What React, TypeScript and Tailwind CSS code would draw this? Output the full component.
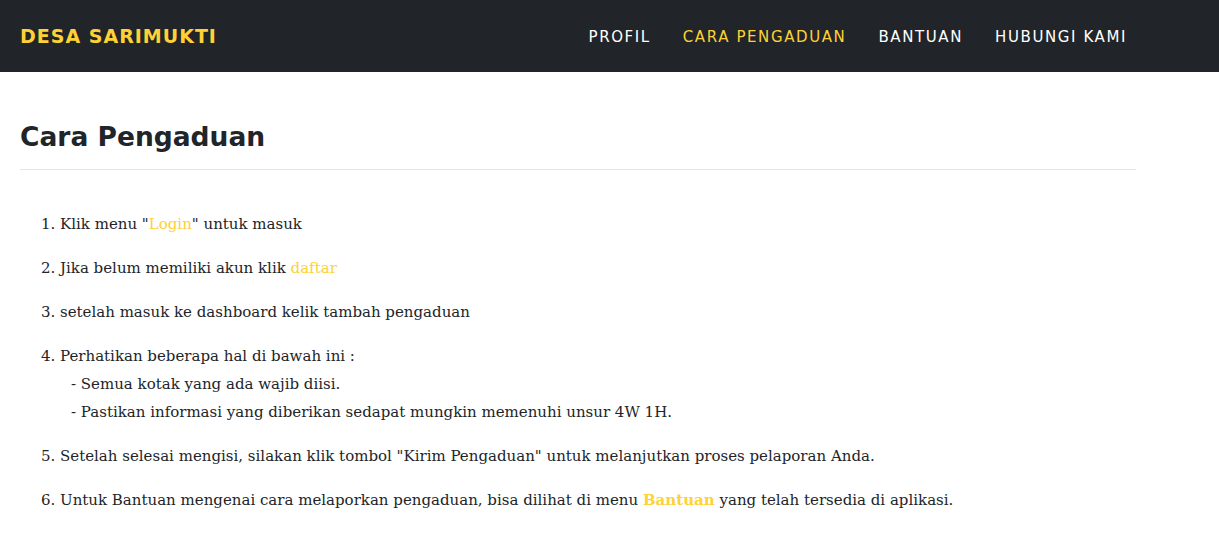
export default function App() {
  const nav = ["PROFIL", "CARA PENGADUAN", "BANTUAN", "HUBUNGI KAMI"];
  return (
    <div className="min-h-screen bg-white">
      {/* Navbar */}
      <nav className="h-[72px] bg-[#212529] flex items-center justify-between pl-5 pr-[76px]">
        <a
          href="#"
          className="text-[#fed136] font-bold text-[19px] tracking-[1px] font-['DejaVu_Sans',sans-serif]"
        >
          DESA SARIMUKTI
        </a>
        <ul className="flex items-center">
          {nav.map((item) => (
            <li key={item}>
              <a
                href="#"
                className={`px-4 text-[15px] tracking-[1.6px] font-['DejaVu_Sans',sans-serif] ${
                  item === "CARA PENGADUAN" ? "text-[#fed136]" : "text-white"
                }`}
              >
                {item}
              </a>
            </li>
          ))}
        </ul>
      </nav>

      {/* Content */}
      <div className="pl-5 w-[1136px] pt-[47px]">
        <h2 className="text-[26.5px] font-bold text-[#212529] leading-[36px] font-['DejaVu_Sans',sans-serif]">
          Cara Pengaduan
        </h2>
        <hr className="mt-[14px] border-t border-[#e5e5e5]" />

        <ol className="list-decimal pl-10 mt-[40px] text-[15px] leading-[28px] text-[#212529] font-['DejaVu_Serif',serif] space-y-4">
          <li>
            Klik menu "<a href="#" className="text-[#fed136]">Login</a>" untuk masuk
          </li>
          <li>
            Jika belum memiliki akun klik <a href="#" className="text-[#fed136]">daftar</a>
          </li>
          <li>setelah masuk ke dashboard kelik tambah pengaduan</li>
          <li>
            Perhatikan beberapa hal di bawah ini :
            <div className="pl-[11px]">- Semua kotak yang ada wajib diisi.</div>
            <div className="pl-[11px]">- Pastikan informasi yang diberikan sedapat mungkin memenuhi unsur 4W 1H.</div>
          </li>
          <li>
            Setelah selesai mengisi, silakan klik tombol "Kirim Pengaduan" untuk melanjutkan proses pelaporan Anda.
          </li>
          <li>
            Untuk Bantuan mengenai cara melaporkan pengaduan, bisa dilihat di menu{" "}
            <a href="#" className="text-[#fed136] font-bold">Bantuan</a> yang telah tersedia di aplikasi.
          </li>
        </ol>
      </div>
    </div>
  );
}
